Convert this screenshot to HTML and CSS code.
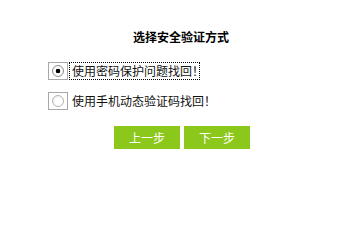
FILE: index.html
```html
<!DOCTYPE html>
<html lang="zh-CN">
<head>
<meta charset="utf-8">
<title>选择安全验证方式</title>
<link rel="stylesheet" href="styles.css">
</head>
<body>
<div class="wrap">
  <h1 class="title">选择安全验证方式</h1>
  <div class="options">
    <div class="opt">
      <span class="radio-box"><input type="radio" name="way" id="w1" class="radio" checked></span>
      <label for="w1" class="label focused">使用密码保护问题找回！</label>
    </div>
    <div class="opt">
      <span class="radio-box"><input type="radio" name="way" id="w2" class="radio"></span>
      <label for="w2" class="label">使用手机动态验证码找回！</label>
    </div>
  </div>
  <div class="actions">
    <button class="btn" type="button">上一步</button>
    <button class="btn" type="button">下一步</button>
  </div>
</div>
</body>
</html>
```
FILE: styles.css
```css
html, body {
  margin: 0;
  padding: 0;
  background: #fff;
}
body {
  font-family: "Noto Sans CJK SC", "Noto Sans", sans-serif;
  font-size: 12px;
  color: #111;
}
.wrap {
  padding-top: 29px;
}
.title {
  margin: 0;
  padding-left: 5px;
  height: 16px;
  line-height: 16px;
  font-size: 12px;
  font-weight: bold;
  text-align: center;
  color: #000;
}
.options {
  margin-top: 17px;
  padding-left: 48px;
  display: flex;
  flex-direction: column;
  gap: 12px;
}
.opt {
  display: flex;
  align-items: center;
  height: 18px;
}
.radio-box {
  box-sizing: border-box;
  width: 20px;
  height: 18px;
  border: 1px solid #a8a8a8;
  display: flex;
  align-items: center;
  justify-content: center;
}
.radio {
  -webkit-appearance: none;
  appearance: none;
  box-sizing: border-box;
  width: 12px;
  height: 12px;
  margin: 0;
  border-radius: 50%;
  border: 1px solid #b4b4b4;
  background: radial-gradient(circle at 60% 60%, #ffffff 40%, #e6e6e6 100%);
}
.radio:checked {
  border-color: #8c8c8c;
  background: radial-gradient(circle, #000 0, #000 2px, #fff 2.6px, #f2f2f2 100%);
}
.label {
  margin-left: 1px;
  padding: 0 2px 0 3px;
  height: 18px;
  line-height: 18px;
  white-space: nowrap;
  font-feature-settings: "halt";
  color: #111;
}
.label.focused {
  outline: 1px dotted #000;
  outline-offset: -1px;
}
.actions {
  margin-top: 16px;
  padding-left: 114px;
  display: flex;
  gap: 4px;
}
.btn {
  width: 66px;
  height: 23px;
  padding: 0;
  border: 0;
  background: #8cc71c;
  color: #fff;
  font-family: "Noto Sans CJK SC", "Noto Sans", sans-serif;
  font-size: 12px;
  line-height: 23px;
}
```
